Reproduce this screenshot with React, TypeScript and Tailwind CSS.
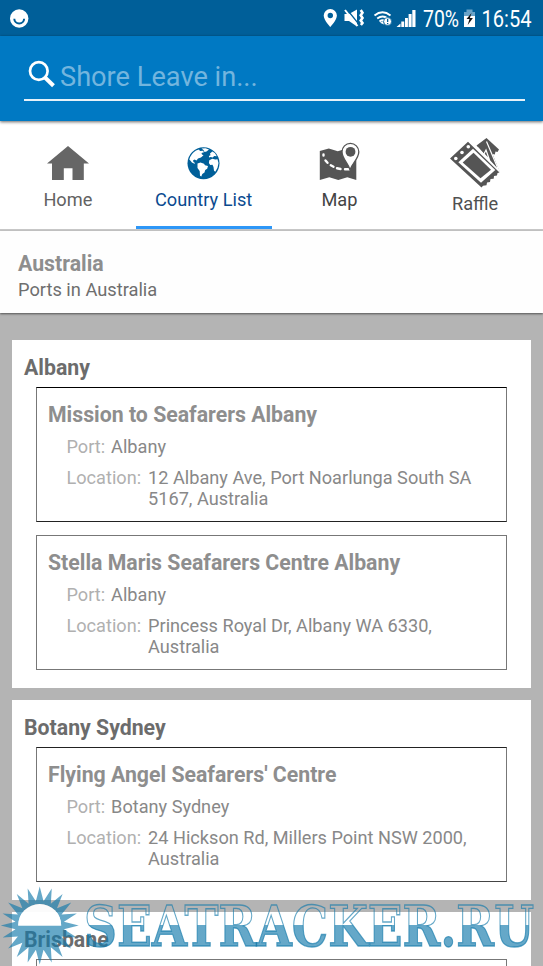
import type { ReactNode } from "react";
import { cx } from "class-variance-authority";

interface Centre {
  name: string;
  port: string;
  location: string[];
}

interface Port {
  name: string;
  centres: Centre[];
}

const ports: Port[] = [
  {
    name: "Albany",
    centres: [
      {
        name: "Mission to Seafarers Albany",
        port: "Albany",
        location: ["12 Albany Ave, Port Noarlunga South SA", "5167, Australia"],
      },
      {
        name: "Stella Maris Seafarers Centre Albany",
        port: "Albany",
        location: ["Princess Royal Dr, Albany WA 6330,", "Australia"],
      },
    ],
  },
  {
    name: "Botany Sydney",
    centres: [
      {
        name: "Flying Angel Seafarers' Centre",
        port: "Botany Sydney",
        location: ["24 Hickson Rd, Millers Point NSW 2000,", "Australia"],
      },
    ],
  },
  { name: "Brisbane", centres: [] },
];

function StatusBar() {
  return (
    <div className="flex h-9 shrink-0 items-center justify-between bg-[#005f99] pl-[10px] pr-[9px]">
      <svg width="19" height="19" viewBox="0 0 19 19">
        <circle cx="9.200" cy="9.500" r="9.200" fill="#fff" />
        <path d="M4.300 9.800a4.900 4.700 0 0 0 9.800 0" fill="none" stroke="#005f99" strokeWidth="2" />
      </svg>
      <svg width="211" height="36" viewBox="323 0 211 36" fill="#fff">
        <path
          fillRule="evenodd"
          d="M330.300 9a6.600 6.600 0 0 0-6.600 6.600c0 4.700 6.600 11.500 6.600 11.500s6.600-6.800 6.600-11.500a6.600 6.600 0 0 0-6.600-6.600zm0 3.800a2.700 2.700 0 1 1 0 5.400 2.700 2.700 0 0 1 0-5.400z"
        />
        <path d="M344.500 14h4.500l8-4.500v17l-8-5.500h-4.500z" />
        <path d="M347 9.500 359.500 25" stroke="#005f99" strokeWidth="1.200" />
        <path d="M345 10 357.500 26" stroke="#fff" strokeWidth="2" />
        <path
          d="M360.700 10l1.800 2.800-1.800 2.500 1.800 2.700-1.800 2.500 1.800 2.500-1.600 2"
          fill="none"
          stroke="#fff"
          strokeWidth="2.600"
        />
        <path
          d="M374.500 15.500q8-6.500 16 0M377.200 18.500q5.500-4 10.500 0M379.500 21.500q3-2.200 5.500-.5"
          fill="none"
          stroke="#fff"
          strokeWidth="1.900"
        />
        <path d="M380 22.700l3-1.500 1 3.300z" />
        <circle cx="387.600" cy="21.500" r="4" stroke="#005f99" strokeWidth=".8" />
        <path d="M387 18.800h1.300v3.200h-1.300zM387 23h1.300v1.200h-1.300z" fill="#005f99" />
        <path d="M396.500 27l4-3.500V27zM401.300 21.500h2.900V27h-2.900zM405 18h2.900v9H405zM408.600 14h3v13h-3zM412.300 10h3.200v17h-3.200z" />
        <text x="423" y="27" fontSize="23" textLength="36" lengthAdjust="spacingAndGlyphs">
          70%
        </text>
        <path d="M466.500 9.500h6V12h2.500v5.500h-11V12h2.500z" fill="#6aa3c7" />
        <path d="M464 16h11v11h-11z" />
        <path d="M471.500 13l-5 6h3l-1.800 6 5.200-7h-3z" fill="#111" />
        <text x="481.500" y="27" fontSize="23" textLength="50" lengthAdjust="spacingAndGlyphs">
          16:54
        </text>
      </svg>
    </div>
  );
}

function SearchHeader() {
  return (
    <header className="relative z-10 h-[85px] shrink-0 bg-[#0079c3] px-[18px] pt-6 pl-6 shadow-[0_1px_3px_rgba(0,0,0,0.6)]">
      <div className="flex h-[41px] items-start border-b-2 border-[#e6f1f9]">
        <svg width="36" height="34" viewBox="0 0 36 34" fill="none" stroke="#fff">
          <circle cx="14.800" cy="11" r="8.800" strokeWidth="2.700" />
          <path d="M21 17.500l8.500 8.300" strokeWidth="4" />
        </svg>
        <input
          className="mt-px h-8 min-w-0 flex-1 bg-transparent text-[27.200px] leading-8 text-white outline-none placeholder:text-[#73b5de]"
          placeholder="Shore Leave in..."
        />
      </div>
    </header>
  );
}

function HomeIcon() {
  return (
    <svg width="42" height="42" viewBox="0 0 42 42" fill="#666">
      <path d="M21 4L42 21.500H36.800V38H25.500V26.300H16.800V38H5V21.500H0z" />
    </svg>
  );
}

function GlobeIcon() {
  return (
    <svg width="42" height="42" viewBox="0 0 42 42">
      <circle cx="20.500" cy="21.300" r="16" fill="#005f99" />
      <g fill="#fff">
        <path d="M6.300 17.500Q8 11.500 13 8.500l3-1 1 1.500 3-.3 1 1.500-2.500.8.500 1.500 1.500.7-2.500 2.200-3 1.200-1.500 2-2-1.200-1.500 1 .5 1.700 1.500.8-.5.800-2.600-1.300-1.600-2z" />
        <path d="M18.500 6.600l4-.4 3.500 1.200-2.500 2.200-2 .5-1-2z" />
        <path d="M14.500 21.500l3-1 3.500 1.200 1 1.500 3 .8-.8 2.800-2 1.200-.7 2.500-2.200 1.500-1 2.500-1.300-.8-.3-4.800-2.200-2.800z" />
        <path d="M27 11.500l2.300-2 2.500 1.500 2 3.300-2.600-.2-1.500 1.300-2-.5-1.500.6-.3-1.500 1.600-.8z" />
        <path d="M26.300 18.200l3-1.500 3 .8 2.200-.2 1 3.800-1 4.700-2.200 4-1.300-1-.5-3.700-1-2.300-2.300.2-1.300-2z" />
      </g>
    </svg>
  );
}

function MapIcon() {
  return (
    <svg width="42" height="42" viewBox="0 0 42 42">
      <path d="M1.800 9l9-2.500 9 2.800 9-2.800 9.500 2.500V38l-9-2.800-9 2.800-9-2.800-9.500 2.800z" fill="#555" />
      <path
        d="M5.500 12.500v1M7.500 18.500l2 2.300M12.800 23.300l2.700 1.400M19 26.300l3.500.7M27 27.200l4 0"
        stroke="#fff"
        strokeWidth="2.400"
        strokeLinecap="round"
        fill="none"
      />
      <path
        d="M32 28C30.500 21 24 17 24 9.800a8.400 8.400 0 0 1 16.800 0C40.800 17 34 21 32 28z"
        fill="#fff"
        stroke="#555"
        strokeWidth="1.300"
      />
      <circle cx="32.500" cy="9.800" r="4.900" fill="#555" />
    </svg>
  );
}

function RaffleIcon() {
  return (
    <svg width="50" height="50" viewBox="0 0 50 50">
      <path d="M26.500 7.500L36.500 0 49 11.500l-1.500 2.500-2-.5-.7 3-2.300-.4 7 17.400z" fill="#555" />
      <path d="M36.500 3.500l12.500 29.500L27.500 9.500M36 12l3.500 10-5.500-6z" fill="none" stroke="#fff" strokeWidth="1.200" />
      <path
        d="M0 20.500L18 3.700 49.500 34.500l-2 .5-.5 2.500-3 .5-.3 2.800-3.200.2-.5 3-3 .5-.5 2.700-3.500.5L31.500 49.500z"
        fill="#555"
      />
      <path d="M8.300 24.200L23 10.700 45.300 32 31 44.700z" fill="#fff" />
      <path d="M12.700 24.400L23.500 14.700 41 31.800 30.500 40.200z" fill="#555" />
      <g fill="#fff">
        <circle cx="5.800" cy="20.500" r="1.800" />
        <circle cx="12" cy="14.500" r="1.800" />
        <circle cx="18.300" cy="8.700" r="1.800" />
      </g>
    </svg>
  );
}

interface TabProps {
  label: string;
  icon: ReactNode;
  active?: boolean;
  labelClass?: string;
}

function Tab({ label, icon, active, labelClass = "text-[#626262]" }: TabProps) {
  return (
    <button className="relative flex flex-1 flex-col items-center justify-center gap-[5px] pt-px">
      {icon}
      <span className={cx("text-[18.200px] leading-[21px]", labelClass)}>{label}</span>
      {active && <span className="absolute inset-x-0 bottom-0 h-[3px] bg-[#2e97f7]" />}
    </button>
  );
}

function CentreBox({ centre, className }: { centre: Centre; className: string }) {
  return (
    <div className={cx("h-[135px] border pt-[14px] pl-[11px]", className)}>
      <h3 className="text-[21.280px] leading-[25px] font-bold text-[#8e8e8e]">{centre.name}</h3>
      <div className="mt-[9px] flex gap-[6px] pl-[18.500px] text-[18.150px] leading-[21px]">
        <span className="text-[#b0b0b0]">Port:</span>
        <span className="text-[#888]">{centre.port}</span>
      </div>
      <div className="mt-[10px] flex gap-[7px] pl-[18.500px] text-[18.150px] leading-[21px]">
        <span className="text-[#b0b0b0]">Location:</span>
        <div className="text-[#888]">
          {centre.location.map((line) => (
            <p key={line}>{line}</p>
          ))}
        </div>
      </div>
    </div>
  );
}

// border and offset of each box, in list order
const boxStyles: Record<string, string> = {
  "Mission to Seafarers Albany": "border-[#777] border-t-black border-b-[#222]",
  "Stella Maris Seafarers Centre Albany": "border-[#777] mt-[0.600px]",
  "Flying Angel Seafarers' Centre": "border-[#777] border-t-[#222] border-b-[#444]",
};

function PortCard({ port }: { port: Port }) {
  return (
    <section className="bg-white px-6 pt-[15px] pb-[18px] pl-3">
      <h2 className="mb-[7px] text-[21.280px] leading-[25px] font-bold text-[#6c6c6c]">{port.name}</h2>
      <div className="flex flex-col gap-3 pl-3">
        {port.centres.map((centre) => (
          <CentreBox key={centre.name} centre={centre} className={boxStyles[centre.name]} />
        ))}
        {port.centres.length === 0 && <div className="h-[135px] border border-[#777]" />}
      </div>
    </section>
  );
}

const RAYS = 20;

function sunPath() {
  const points: string[] = [];
  for (let i = 0; i < RAYS * 2; i++) {
    const r = i % 2 === 0 ? 39 : 24.5;
    const a = (i * Math.PI) / RAYS;
    points.push(`${(39.7 + r * Math.sin(a)).toFixed(2)} ${(39.5 - r * Math.cos(a)).toFixed(2)}`);
  }
  return `M${points.join("L")}z`;
}

function Watermark() {
  return (
    <svg className="absolute bottom-0 left-0" width="543" height="80" viewBox="0 0 543 80">
      <defs>
        <linearGradient id="half" gradientUnits="userSpaceOnUse" x1="0" y1="0" x2="0" y2="78">
          <stop offset="0.5" stopColor="#1279ab" stopOpacity="0" />
          <stop offset="0.5" stopColor="#1279ab" stopOpacity="0.65" />
        </linearGradient>
      </defs>
      <path
        d={`${sunPath()}M18.200 39.500h43a21.500 21.500 0 0 0-43 0z`}
        fill="#1279ab"
        fillOpacity="0.650"
        fillRule="evenodd"
      />
      <path d="M18.200 39.500h43a21.500 21.500 0 0 0-43 0z" fill="#fff" fillOpacity="0.950" />
      <text
        x="84"
        y="60"
        className="font-['DejaVu_Serif',serif] font-bold"
        fontSize="56.500"
        textLength="450"
        lengthAdjust="spacingAndGlyphs"
        fill="url(#half)"
        stroke="#1279ab"
        strokeOpacity="0.650"
        strokeWidth="1.300"
      >
        SEATRACKER.RU
      </text>
    </svg>
  );
}

export default function App() {
  return (
    <div className="relative flex h-[966px] w-[543px] flex-col overflow-hidden bg-[#b4b4b4] font-['Roboto',sans-serif]">
      <StatusBar />
      <SearchHeader />
      <nav className="flex h-[110px] shrink-0 border-b-2 border-[#c8c8c8] bg-white">
        <Tab label="Home" icon={<HomeIcon />} />
        <Tab label="Country List" icon={<GlobeIcon />} active labelClass="text-[#0b4a8f]" />
        <Tab label="Map" icon={<MapIcon />} labelClass="text-[#444]" />
        <Tab label="Raffle" icon={<RaffleIcon />} labelClass="text-[#505050]" />
      </nav>
      <div className="h-[82px] shrink-0 bg-[#fefefe] pt-5 pl-[18px] shadow-[0_1px_2px_rgba(0,0,0,0.55)]">
        <h1 className="text-[21.280px] leading-[25px] font-bold text-[#8e8e8e]">Australia</h1>
        <p className="mt-[3px] text-[18.250px] leading-[21px] text-[#6e6e6e]">Ports in Australia</p>
      </div>
      <main className="mt-[27px] flex flex-col gap-3 px-3">
        {ports.map((port) => (
          <PortCard key={port.name} port={port} />
        ))}
      </main>
      <Watermark />
    </div>
  );
}
